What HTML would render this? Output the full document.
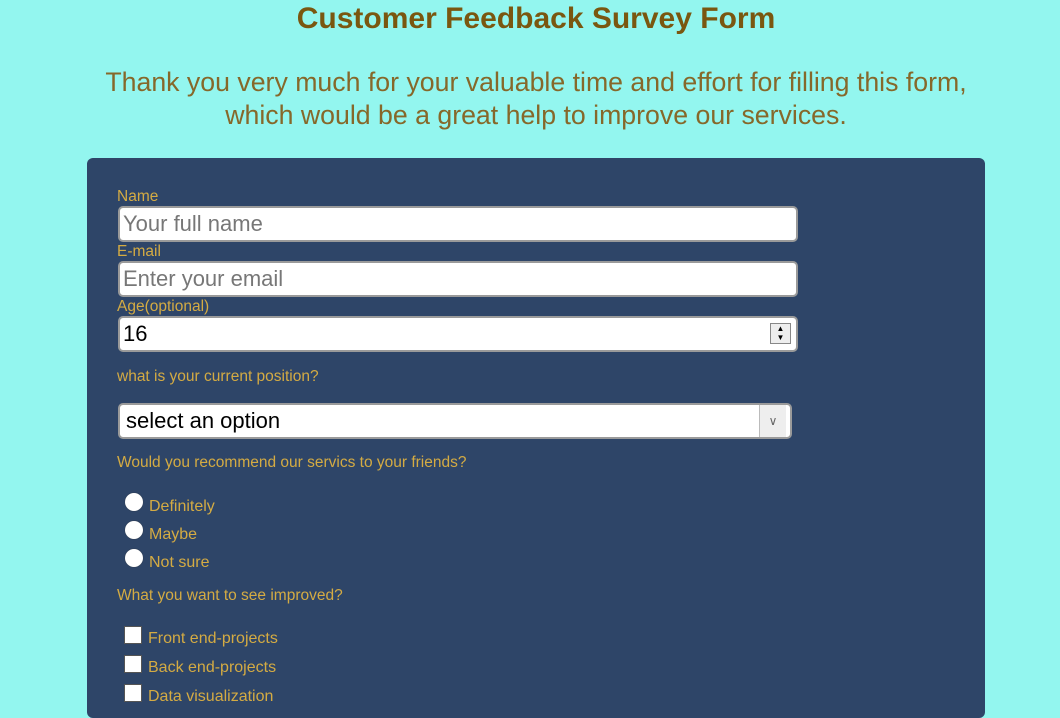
<!DOCTYPE html>
<html><head><style>
body{margin:0;width:1060px;height:711px;overflow:hidden;background:#93f6ef;font-family:"Liberation Sans",sans-serif;position:relative}
.a{position:absolute;white-space:nowrap}
h1{position:absolute;margin:0;left:0;width:1072px;text-align:center;top:2px;font-size:30px;font-weight:bold;color:#7a5710;font-family:"Liberation Sans",sans-serif}
.sub{position:absolute;left:0;width:1072px;text-align:center;top:66px;font-size:26.7px;line-height:33px;color:#86682a}
.form{position:absolute;left:87px;top:158px;width:898px;height:560px;background:#2e4568;border-radius:6px}
.l{position:absolute;color:#d4ab43;font-size:15.5px;white-space:nowrap}
.in{position:absolute;left:118px;width:674px;height:32px;background:#fff;border:2px solid #9a9a9a;border-radius:5px;font-size:22px;line-height:32px;padding-left:3px;box-sizing:content-box;color:#777}
.r{position:absolute;left:125px;width:18px;height:18px;border-radius:50%;background:#fff;box-shadow:0 0 1px #333}
.c{position:absolute;left:124px;width:18px;height:18px;background:#fff;border:1px solid #555;box-sizing:border-box}
.lb{position:absolute;color:#d4ab43;font-size:16px}
</style></head><body>
<h1>Customer Feedback Survey Form</h1>
<div class="sub">Thank you very much for your valuable time and effort for filling this form,<br>which would be a great help to improve our services.</div>
<div class="form"></div>
<div class="l" style="left:117px;top:188px">Name</div>
<div class="in" style="top:206px;width:673px">Your full name</div>
<div class="l" style="left:117px;top:243px">E-mail</div>
<div class="in" style="top:261px;width:673px">Enter your email</div>
<div class="l" style="left:117px;top:298px">Age(optional)</div>
<div class="in" style="top:316px;width:673px;color:#000">16</div>
<div class="a" style="left:770px;top:323px;width:19px;height:19px;border:1px solid #888;background:#eee;font-size:8px;line-height:9px;text-align:center;color:#000">▲<br>▼</div>
<div class="l" style="left:117px;top:368px">what is your current position?</div>
<div class="in" style="top:403px;width:664px;color:#000;padding-left:6px">select an option</div>
<div class="a" style="left:759px;top:405px;width:26px;height:32px;background:#eee;border-left:1px solid #bbb;color:#666;font-size:12px;line-height:32px;text-align:center">∨</div>
<div class="l" style="left:117px;top:454px">Would you recommend our servics to your friends?</div>
<div class="r" style="top:493px"></div><div class="lb" style="left:149px;top:498px">Definitely</div>
<div class="r" style="top:521px"></div><div class="lb" style="left:149px;top:526px">Maybe</div>
<div class="r" style="top:549px"></div><div class="lb" style="left:149px;top:554px">Not sure</div>
<div class="l" style="left:117px;top:587px">What you want to see improved?</div>
<div class="c" style="top:626px"></div><div class="lb" style="left:148px;top:630px">Front end-projects</div>
<div class="c" style="top:655px"></div><div class="lb" style="left:148px;top:659px">Back end-projects</div>
<div class="c" style="top:684px"></div><div class="lb" style="left:148px;top:688px">Data visualization</div>
</body></html>
